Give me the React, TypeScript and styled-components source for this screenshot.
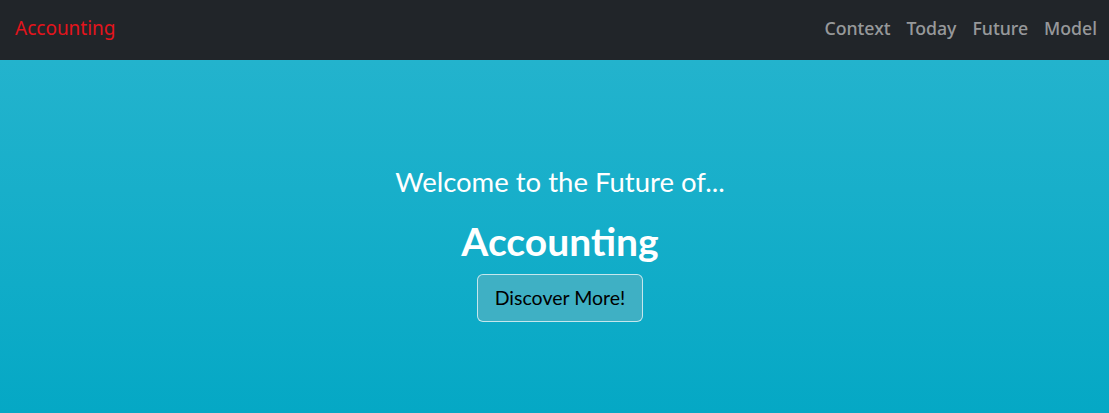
import React from "react";
import styled, { createGlobalStyle } from "styled-components";

const Global = createGlobalStyle`
  html, body { margin: 0; padding: 0; }
  body { background: #05a8c5; }
  * { box-sizing: border-box; }
`;

const Page = styled.div`
  display: flex;
  flex-direction: column;
  height: 413px;
`;

const NavBar = styled.nav`
  height: 60px;
  background: #212529;
  display: flex;
  align-items: center;
  justify-content: space-between;
  padding: 0 12px 4px 15px;
  font-family: "Noto Sans", sans-serif;
`;

const Brand = styled.a`
  color: #e3141c;
  font-size: 19px;
  text-decoration: none;
`;

const Links = styled.div`
  display: flex;
  gap: 16px;
`;

const NavLink = styled.a`
  color: rgba(255, 255, 255, 0.55);
  font-size: 17.7px;
  font-weight: 500;
  text-decoration: none;
`;

const Hero = styled.section`
  flex: 1;
  background: linear-gradient(180deg, #23b3cd 0%, #05a8c5 100%);
  display: flex;
  flex-direction: column;
  align-items: center;
  justify-content: center;
  padding: 14px 0 0 11px;
  font-family: "Lato", sans-serif;
  color: #fff;
`;

const Sub = styled.h2`
  margin: 0;
  font-size: 27.5px;
  font-weight: 400;
  line-height: 1.2;
`;

const Title = styled.h1`
  margin: 20px 0 0;
  font-size: 39px;
  font-weight: 700;
  line-height: 1.2;
`;

const Button = styled.button`
  margin-top: 9px;
  width: 166px;
  height: 48px;
  background: #3fb0c4;
  border: 1px solid rgba(255, 255, 255, 0.7);
  border-radius: 6px;
  color: #000;
  font-family: "Lato", sans-serif;
  font-size: 19.5px;
`;

export default function App() {
  return (
    <Page>
      <Global />
      <NavBar>
        <Brand href="#">Accounting</Brand>
        <Links>
          <NavLink href="#">Context</NavLink>
          <NavLink href="#">Today</NavLink>
          <NavLink href="#">Future</NavLink>
          <NavLink href="#">Model</NavLink>
        </Links>
      </NavBar>
      <Hero>
        <Sub>Welcome to the Future of...</Sub>
        <Title>Accounting</Title>
        <Button>Discover More!</Button>
      </Hero>
    </Page>
  );
}
